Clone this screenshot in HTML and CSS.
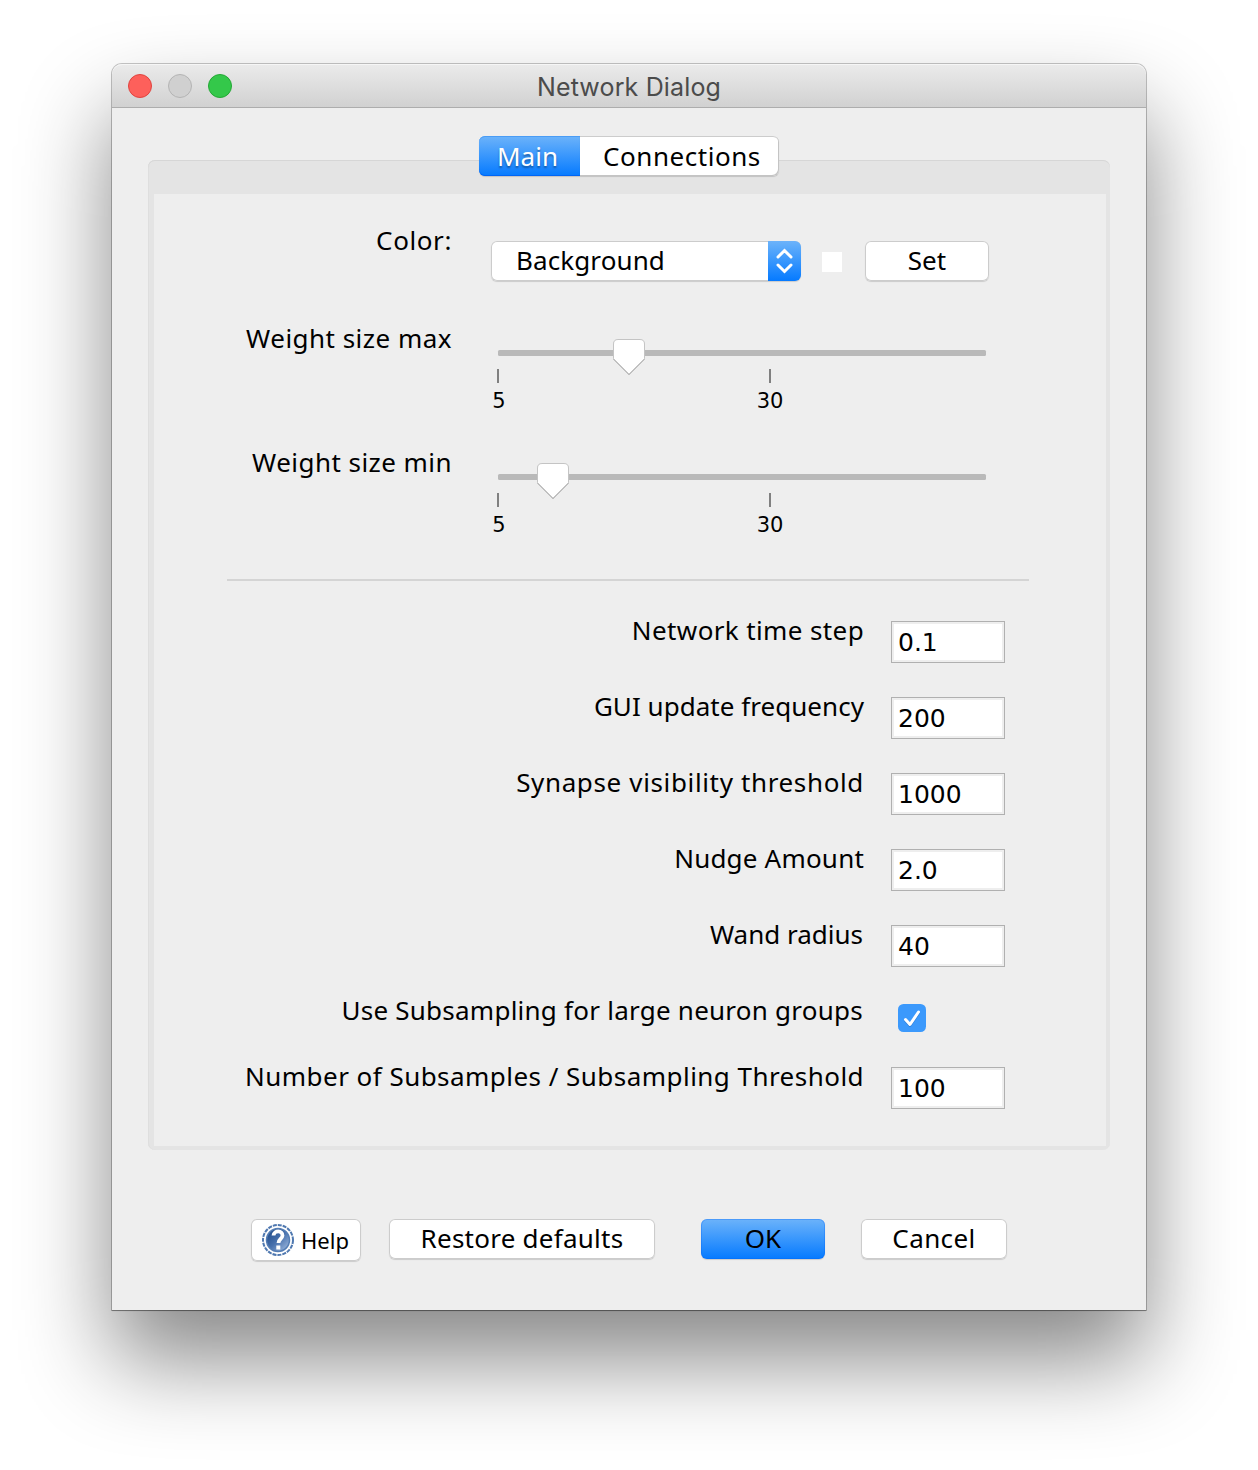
FILE: index.html
```html
<!DOCTYPE html>
<html lang="en">
<head>
<meta charset="utf-8">
<title>Network Dialog</title>
<link rel="stylesheet" href="styles.css">
</head>
<body>
<main class="window">
  <header class="titlebar">
    <div class="lights"><i class="light close"></i><i class="light minimize"></i><i class="light zoom"></i></div>
    <h1 class="title">Network Dialog</h1>
  </header>
  <nav class="tabs">
    <span class="tab active t-main">Main</span><span class="tab t-conn">Connections</span>
  </nav>
  <section class="panel">
    <div class="pane">
      <div class="row color-row">
        <label class="label t-color">Color:</label>
        <div class="controls">
          <div class="select"><span class="t-back">Background</span>
            <svg class="stepper" viewBox="0 0 33 40"><path d="M10 16l6.500-6.500 6.500 6.500M10 24l6.500 6.500 6.500-6.500"/></svg>
          </div>
          <span class="swatch"></span>
          <button class="button set">Set</button>
        </div>
      </div>
      <div class="row slider-row">
        <label class="label t-max">Weight size max</label>
        <svg class="slider" viewBox="0 0 500 90">
          <rect class="track" x="7" y="23" width="488" height="6" rx="1.500"/>
          <path class="tick" d="M7 42v14M279 42v14"/>
          <text x="8" y="81">5</text><text x="279" y="81">30</text>
          <path class="thumb" d="M127 12.500h22q4.500 0 4.500 4.500v14.500L138 47 122.500 31.500v-14.500q0-4.500 4.500-4.500z"/>
        </svg>
      </div>
      <div class="row slider-row">
        <label class="label t-min">Weight size min</label>
        <svg class="slider" viewBox="0 0 500 90">
          <rect class="track" x="7" y="23" width="488" height="6" rx="1.500"/>
          <path class="tick" d="M7 42v14M279 42v14"/>
          <text x="8" y="81">5</text><text x="279" y="81">30</text>
          <path class="thumb" d="M51 12.500h22q4.500 0 4.500 4.500v14.500L62 47 46.500 31.500v-14.500q0-4.500 4.500-4.500z"/>
        </svg>
      </div>
      <hr class="separator">
      <div class="row field-row"><label class="label t-step">Network time step</label><input class="field" value="0.1"></div>
      <div class="row field-row"><label class="label t-gui">GUI update frequency</label><input class="field" value="200"></div>
      <div class="row field-row"><label class="label t-syn">Synapse visibility threshold</label><input class="field" value="1000"></div>
      <div class="row field-row"><label class="label t-nudge">Nudge Amount</label><input class="field" value="2.0"></div>
      <div class="row field-row"><label class="label t-wand">Wand radius</label><input class="field" value="40"></div>
      <div class="row field-row check-row"><label class="label t-use">Use Subsampling for large neuron groups</label>
        <svg class="check" viewBox="0 0 28 28"><rect width="28" height="28" rx="5.500"/><path class="check-shade" d="M7.500 16.500l4.500 5L20.500 9"/><path d="M7.500 15.500l4.500 5L20.500 8"/></svg>
      </div>
      <div class="row field-row"><label class="label t-num">Number of Subsamples / Subsampling Threshold</label><input class="field" value="100"></div>
    </div>
  </section>
  <footer class="actions">
    <button class="button help">
      <svg class="help-icon" viewBox="0 0 32 32">
        <defs><linearGradient id="globe" x1="0" y1="0" x2="1" y2="1"><stop offset="0" stop-color="#194381"/><stop offset=".5" stop-color="#4871ad"/><stop offset="1" stop-color="#aac3e5"/></linearGradient></defs>
        <circle cx="16" cy="16" r="15" fill="#fff" stroke="#4f78b0" stroke-width="2" stroke-dasharray="4 1"/>
        <circle cx="16" cy="16" r="11.500" fill="url(#globe)" stroke="#547db4" stroke-width="1.500"/>
        <path d="M11.500 11.500c.3-5.500 9.500-5.300 9 .2-.3 3.300-4 3.300-4 7.300" fill="none" stroke="#fff" stroke-width="3.800"/>
        <rect x="14.300" y="21.500" width="4" height="4" fill="#fff"/>
      </svg><span class="t-help">Help</span>
    </button>
    <button class="button restore">Restore defaults</button>
    <button class="button ok">OK</button>
    <button class="button cancel">Cancel</button>
  </footer>
</main>
</body>
</html>
```
FILE: styles.css
```css
* { box-sizing: border-box; }
body {
  margin: 0;
  padding: 64px 112px;
  height: 1470px;
  overflow: hidden;
  background: #fff;
  color: #000;
  font: 26px/32px "Noto Sans", sans-serif;
}
.window {
  width: 1034px;
  height: 1246px;
  background: #eee;
  border-radius: 10px 10px 0 0;
  box-shadow: 0 0 0 1px rgba(0,0,0,.22), 0 1px 1px rgba(0,0,0,.3), 0 50px 90px rgba(0,0,0,.47);
}
.titlebar {
  display: grid;
  grid-template-columns: 200px 1fr 200px;
  align-items: center;
  height: 44px;
  border-radius: 10px 10px 0 0;
  border-bottom: 1px solid #adadad;
  background: linear-gradient(#ebebeb, #d1d1d1);
  box-shadow: inset 0 1px #f6f6f6;
}
.lights { display: flex; gap: 16px; padding-left: 16px; }
.light { width: 24px; height: 24px; border-radius: 50%; border: 1px solid; }
.close { background: #fd605b; border-color: #e0443f; }
.minimize { background: #d0d0d0; border-color: #b4b4b4; }
.zoom { background: #34c84a; border-color: #24a835; }
.title {
  margin: 2px 0 0;
  text-align: center;
  color: #4b4b4b;
  font: 400 25px/32px Inter, sans-serif;
  letter-spacing: .15px;
}
.tabs {
  display: flex;
  position: relative;
  margin-top: 28px;
  padding-left: 367px;
}
.tab {
  height: 40px;
  line-height: 40px;
  background: #fff;
  border-radius: 0 6px 6px 0;
  box-shadow: inset 0 1px #ccc, inset -1px -1px #c4c4c4, 0 1px 1px rgba(0,0,0,.15);
}
.tab.active {
  color: #fff;
  border-radius: 6px 0 0 6px;
  background: linear-gradient(#6cb3fa, #057aff);
  box-shadow: inset 0 1px #4a9cf5, inset 0 -1px #0065f5, 0 1px 1px rgba(0,0,0,.15);
  text-shadow: 0 2px 2px rgba(0,0,0,.35);
}
.t-main { width: 101px; padding-left: 18px; letter-spacing: 0; }
.t-conn { width: 199px; padding-left: 23px; letter-spacing: .55px; }
.panel {
  width: 962px;
  height: 990px;
  margin: -16px 0 0 36px;
  padding: 34px 4px 4px 6px;
  border-radius: 7px;
  background: #e4e4e4;
  box-shadow: inset 0 1px #d6d6d6, inset 1px 0 #dedede;
}
.pane { height: 952px; padding-top: 30px; background: #eee; }
.row { display: grid; align-items: start; }
.color-row, .slider-row { grid-template-columns: 298px 1fr; column-gap: 39px; }
.color-row { height: 98px; }
.slider-row { height: 124px; }
.label { justify-self: end; white-space: nowrap; }
.controls { display: flex; align-items: center; margin-top: 17px; }
.select {
  display: flex;
  justify-content: space-between;
  width: 310px;
  height: 40px;
  line-height: 38px;
  padding-left: 24px;
  background: #fff;
  border-radius: 6px;
  box-shadow: inset 0 0 0 1px #ccc, 0 1px 1px rgba(0,0,0,.15);
}
.stepper {
  width: 33px;
  height: 40px;
  border-radius: 0 6px 6px 0;
  background: linear-gradient(#6cb3fa, #057aff);
}
.stepper path { fill: none; stroke: #fff; stroke-width: 3; stroke-linecap: round; }
.swatch { width: 20px; height: 20px; margin: 2px 23px 0 21px; background: #fff; }
.slider { width: 500px; height: 90px; margin-top: 5px; }
.track { fill: #b9b9b9; }
.tick { stroke: #808080; stroke-width: 2; }
.thumb { fill: #fff; stroke: #c4c4c4; filter: drop-shadow(0 1px .5px rgba(0,0,0,.2)); }
.slider text { font: 21px "DejaVu Sans", sans-serif; text-anchor: middle; }
.separator { width: 802px; height: 2px; margin: 9px 0 33px 73px; border: 0; background: #d4d4d4; }
.field-row { grid-template-columns: 710px 114px; column-gap: 27px; height: 76px; }
.check-row { height: 66px; }
.field {
  width: 114px;
  height: 42px;
  margin-top: 7px;
  padding: 1px 0 0 6px;
  border: 1px solid #b0b0b0;
  border-radius: 0;
  outline: 0;
  background: #fff;
  box-shadow: inset 0 0 0 2px #eee;
  font: 25px "DejaVu Sans", sans-serif;
}
.check { width: 28px; height: 28px; margin: 10px 0 0 7px; }
.check rect { fill: #3b99fc; }
.check path { fill: none; stroke: #fff; stroke-width: 3; stroke-linecap: round; stroke-linejoin: round; }
.check .check-shade { stroke: #2c7fdb; }
.button {
  height: 40px;
  padding: 0 0 2px;
  border: 0;
  border-radius: 6px;
  background: #fff;
  color: #000;
  font: 26px/38px "Noto Sans", sans-serif;
  white-space: nowrap;
  box-shadow: inset 0 0 0 1px #ccc, 0 1px 1px rgba(0,0,0,.15);
}
.actions { display: flex; align-items: flex-start; padding: 69px 0 0 139px; }
.set { width: 124px; }
.help { display: flex; align-items: center; width: 110px; height: 42px; margin-right: 28px; padding: 0 0 0 11px; font-size: 22px; }
.help-icon { width: 32px; height: 32px; margin-right: 7px; }
.restore { width: 266px; margin-right: 46px; letter-spacing: .25px; }
.ok { width: 124px; margin-right: 36px; background: linear-gradient(#6cb3fa, #057aff); box-shadow: inset 0 0 0 1px rgba(0,100,250,.3), 0 1px 1px rgba(0,0,0,.15); }
.cancel { width: 146px; letter-spacing: .4px; }
.t-color { letter-spacing: .6px; }
.t-back { padding-left: 1px; letter-spacing: .1px; }
.t-max { letter-spacing: .48px; }
.t-min { letter-spacing: .45px; }
.t-step { letter-spacing: .38px; }
.t-gui { letter-spacing: .04px; }
.t-syn { letter-spacing: .64px; }
.t-nudge { letter-spacing: .2px; }
.t-wand { padding-right: 1px; letter-spacing: 0; }
.t-use { padding-right: 1px; letter-spacing: .24px; }
.t-num { letter-spacing: .46px; }
```
